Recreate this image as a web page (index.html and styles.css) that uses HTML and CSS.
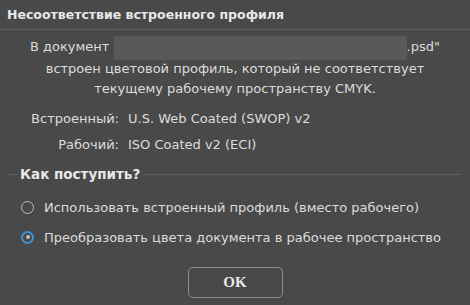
FILE: index.html
```html
<!DOCTYPE html>
<html lang="ru">

<head>
    <meta charset="UTF-8">
    <link rel="stylesheet" href="styles.css">
    <title>Несоответствие встроенного профиля</title>
</head>

<body>
    <div class="dialog">
        <div class="dialog-title">Несоответствие встроенного профиля</div>

        <div class="dialog-body">
            <div class="message">
                <div class="message-line first">В документ <span class="redacted"></span>.psd"</div>
                <div class="message-line">встроен цветовой профиль, который не соответствует</div>
                <div class="message-line">текущему рабочему пространству CMYK.</div>
            </div>

            <div class="profiles">
                <span class="profile-label">Встроенный:</span>
                <span class="profile-value">U.S. Web Coated (SWOP) v2</span>
                <span class="profile-label">Рабочий:</span>
                <span class="profile-value">ISO Coated v2 (ECI)</span>
            </div>

            <fieldset class="options">
                <legend>Как поступить?</legend>
                <label class="radio">
                    <span class="radio-mark"></span>
                    Использовать встроенный профиль (вместо рабочего)
                </label>
                <label class="radio checked">
                    <span class="radio-mark"></span>
                    Преобразовать цвета документа в рабочее пространство
                </label>
            </fieldset>

            <div class="actions">
                <button type="button" class="btn-ok">OK</button>
            </div>
        </div>
    </div>
</body>

</html>
```

FILE: styles.css
```css
* {
    margin: 0;
    padding: 0;
    box-sizing: border-box;
}

body {
    font-family: 'DejaVu Sans', 'Noto Sans', sans-serif;
    font-size: 13px;
    background-color: #494949;
    color: #dcdcdc;
    width: 470px;
    height: 305px;
    overflow: hidden;
}

/* Title */
.dialog-title {
    height: 30px;
    padding: 0 7px;
    line-height: 30px;
    font-weight: 700;
    font-size: 12.5px;
    color: #e8e8e8;
    border-bottom: 1px solid #5e5e5e;
}

/* Message */
.message {
    text-align: center;
    padding-top: 7px;
}

.message-line {
    height: 20px;
    line-height: 20px;
}

.message-line.first {
    height: 22px;
}

.redacted {
    display: inline-block;
    width: 293px;
    height: 24px;
    margin: -2px 0;
    background-color: #595959;
    vertical-align: middle;
}

/* Profiles */
.profiles {
    display: grid;
    grid-template-columns: 119px auto;
    column-gap: 9px;
    row-gap: 6px;
    padding-top: 10px;
    line-height: 20px;
}

.profile-label {
    text-align: right;
}

/* Options */
.options {
    border: none;
    border-top: 1px solid #5e5e5e;
    margin: 9px 9px 0 7px;
    padding: 8px 0 0 10px;
}

.options legend {
    font-weight: 700;
    font-size: 13.5px;
    line-height: 20px;
    padding: 0 3px;
    color: #e8e8e8;
}

.radio {
    display: flex;
    align-items: center;
    gap: 10px;
    height: 30px;
    margin-left: 4px;
}

.radio-mark {
    width: 13px;
    height: 13px;
    border-radius: 50%;
    border: 1.5px solid #bdbdbd;
    position: relative;
}

.radio.checked .radio-mark {
    border: 2px solid #3d92d6;
}

.radio.checked .radio-mark::after {
    content: "";
    position: absolute;
    left: 2.5px;
    top: 2.5px;
    width: 4px;
    height: 4px;
    border-radius: 50%;
    background-color: #bdbdbd;
}

/* Actions */
.actions {
    display: flex;
    justify-content: center;
    padding-top: 15px;
}

.btn-ok {
    width: 95px;
    height: 31px;
    border: 1px solid #8c8c8c;
    border-radius: 5px;
    background-color: #494949;
    color: #e8e8e8;
    font-family: 'Liberation Serif', serif;
    font-weight: 700;
    font-size: 15px;
}
```
